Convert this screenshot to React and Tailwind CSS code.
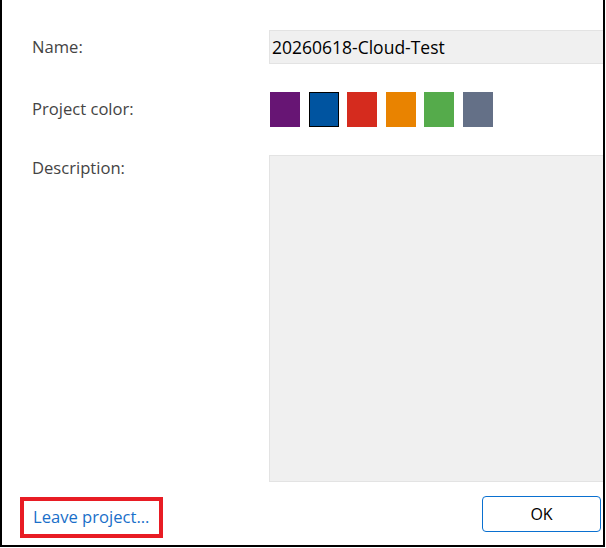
import React, { useState } from 'react';

const COLORS = [
    { name: 'purple', cls: 'bg-[#671574]' },
    { name: 'blue', cls: 'bg-[#0054a0]' },
    { name: 'red', cls: 'bg-[#d52b1e]' },
    { name: 'orange', cls: 'bg-[#e98300]' },
    { name: 'green', cls: 'bg-[#55ab4b]' },
    { name: 'slate', cls: 'bg-[#647087]' },
];

const App = () => {
    const [name, setName] = useState('20260618-Cloud-Test');
    const [color, setColor] = useState('blue');

    return (
        <div className="w-[606px] h-[548px] bg-white font-['Open_Sans',sans-serif]">
            <div className="w-[605px] h-[547px] border-l-2 border-r-2 border-b-2 border-black flex flex-col">
                {/* Form fields */}
                <div className="grid grid-cols-[237px_1fr] pl-[30px] pt-[30px] text-[16.6px] text-[#444]">
                    <label className="h-[34px] flex items-center">Name:</label>
                    <input
                        value={name}
                        onChange={(e) => setName(e.target.value)}
                        className="h-[34px] bg-[#f0f0f0] border border-[#e3e3e3] border-r-0 pl-[2px] text-[17.5px] text-black outline-none"
                    />

                    <label className="mt-[28px] h-[35px] flex items-center">Project color:</label>
                    <div className="mt-[28px] flex gap-[8.6px] pl-[1px]">
                        {COLORS.map((c) => (
                            <button
                                key={c.name}
                                onClick={() => setColor(c.name)}
                                className={`w-[30px] h-[35px] ${c.cls} ${color === c.name ? 'border border-black' : ''}`}
                            />
                        ))}
                    </div>

                    <label className="mt-[28px] pt-[1px]">Description:</label>
                    <textarea className="mt-[28px] h-[327px] bg-[#f0f0f0] border border-[#e3e3e3] border-r-0 resize-none outline-none" />
                </div>

                {/* Footer actions */}
                <div className="flex items-start justify-between pl-[18px] pr-[2px] mt-[14px]">
                    <button className="mt-[1px] w-[143px] h-[41px] border-[4px] border-[#e81c24] text-left pl-[9px] text-[16.6px] text-[#1a6fc9]">
                        Leave project...
                    </button>
                    <button className="w-[119px] h-[36px] border border-[#0a70d0] rounded-[4px] text-[16px] text-black">
                        OK
                    </button>
                </div>
            </div>
        </div>
    );
};

export default App;
